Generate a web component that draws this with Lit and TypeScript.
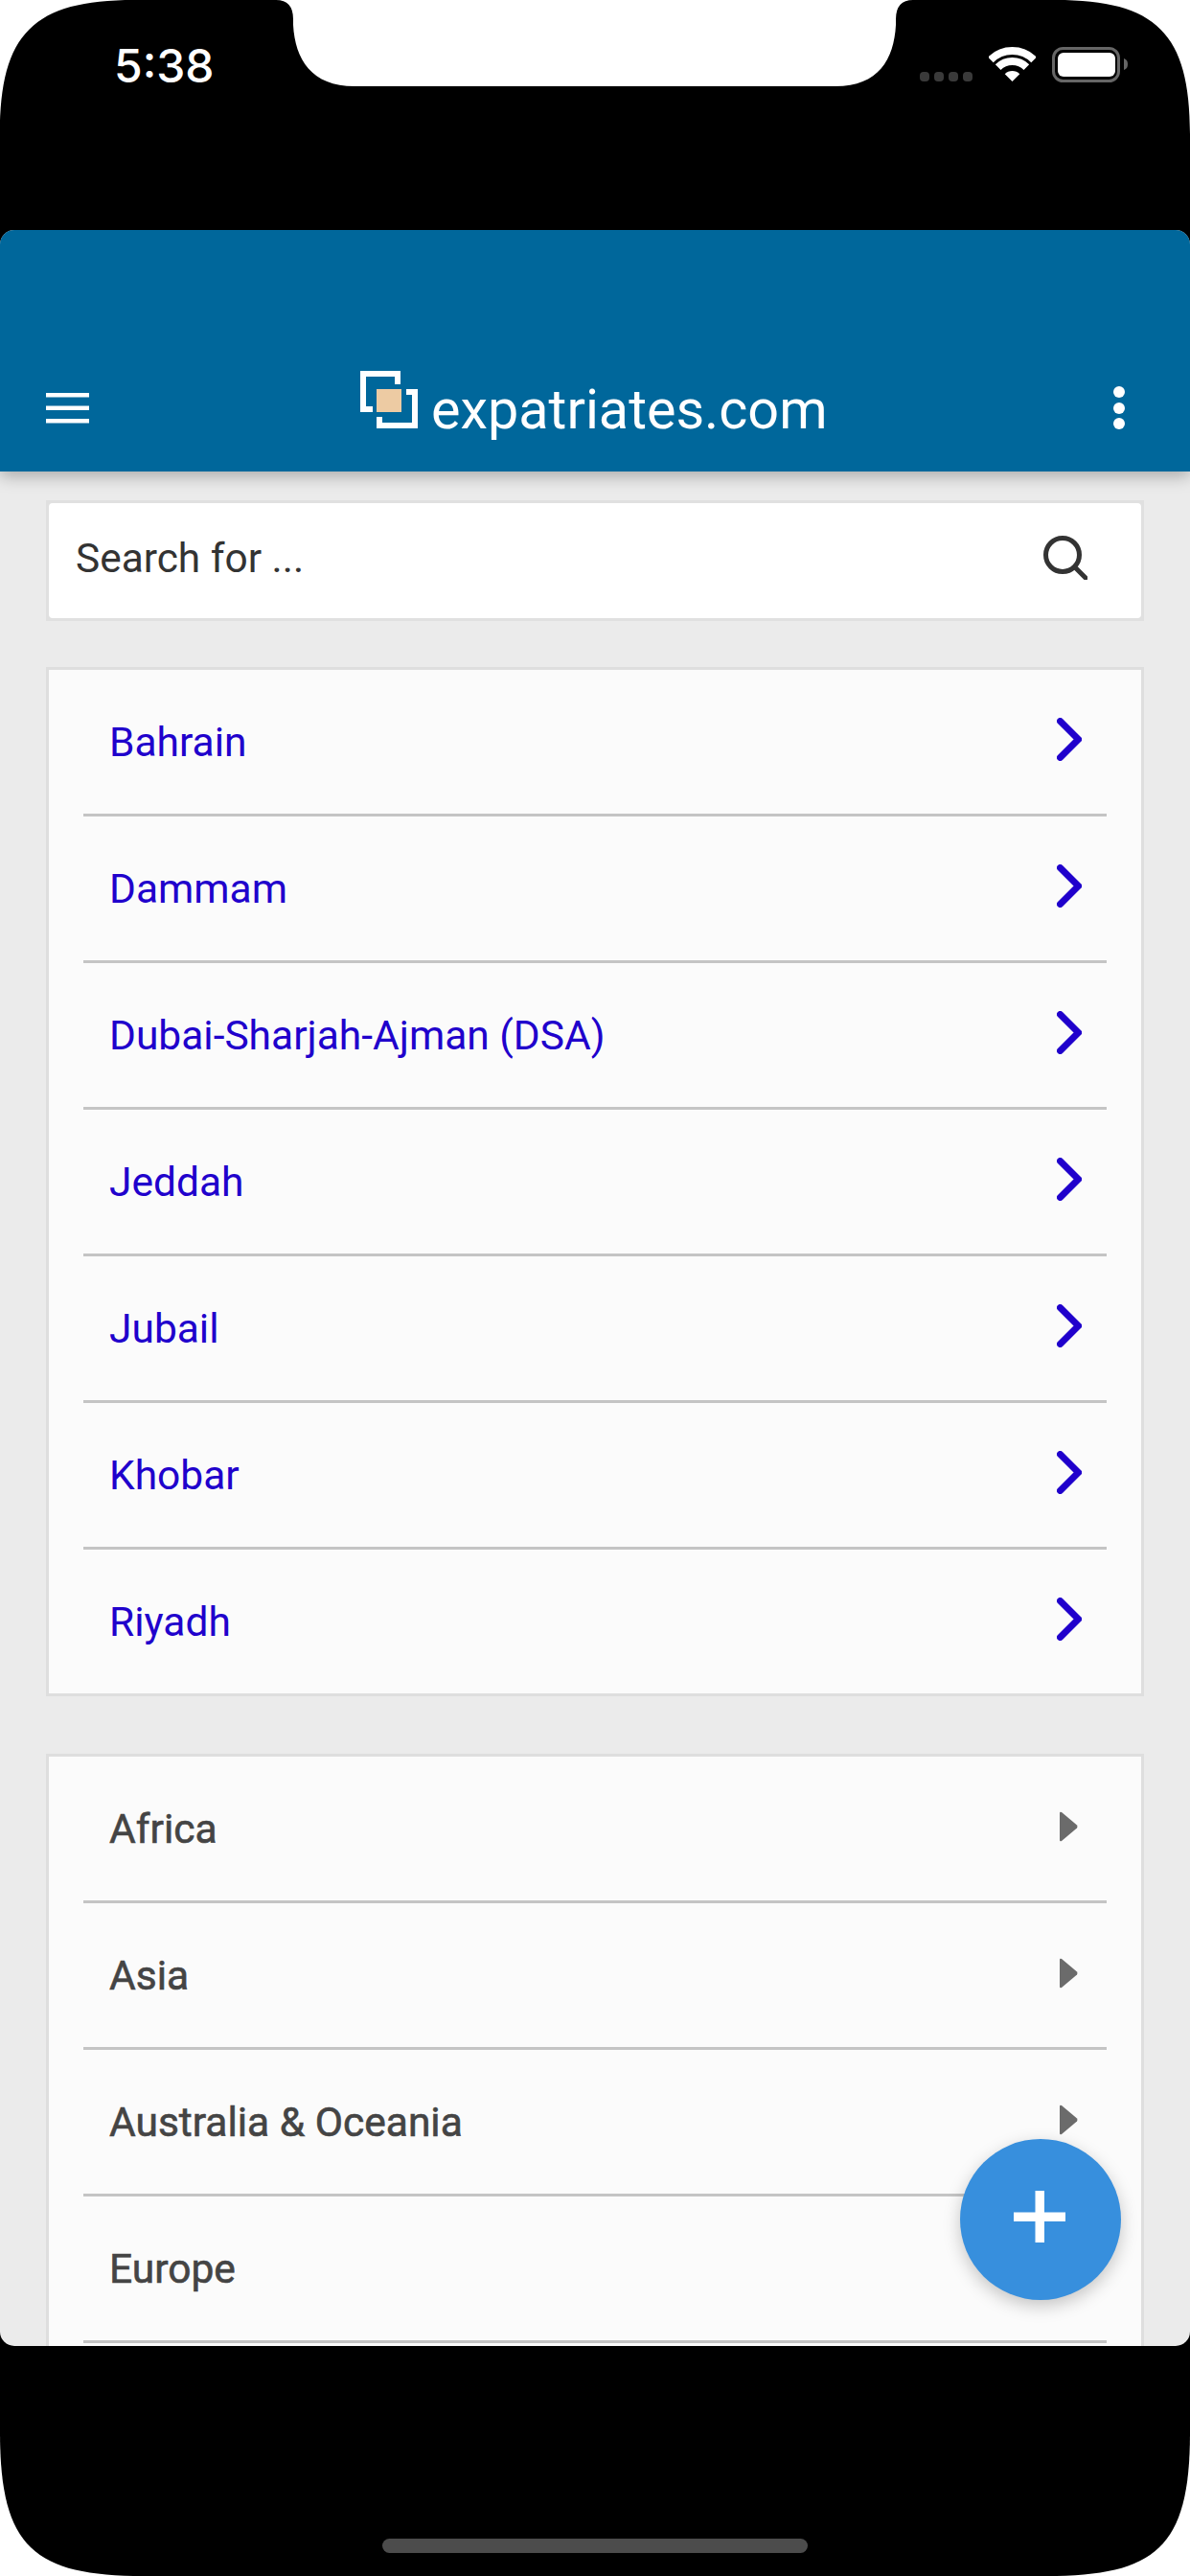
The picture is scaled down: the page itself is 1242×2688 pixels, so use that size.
import { LitElement, html, css, svg } from "lit";
import { customElement } from "lit/decorators.js";

const CITIES = ["Bahrain", "Dammam", "Dubai-Sharjah-Ajman (DSA)", "Jeddah", "Jubail", "Khobar", "Riyadh"];
const REGIONS = ["Africa", "Asia", "Australia & Oceania", "Europe"];

@customElement("app-root")
export class AppRoot extends LitElement {
  static styles = css`
    :host { display: block; width: 1242px; height: 2688px; background: #fff; font-family: Roboto, "Liberation Sans", sans-serif; overflow: hidden; }
    .bezel { position: relative; display: block; width: 1242px; }
    .bezel-top { height: 240px; }
    .bezel-bottom { height: 240px; }
    .bezel-art { position: absolute; inset: 0; width: 1242px; height: 240px; display: block; }
    .status { position: relative; height: 120px; display: flex; align-items: flex-start; padding-left: 119px; box-sizing: border-box; }
    .time { font-family: Inter, "Liberation Sans", sans-serif; font-weight: 500; font-size: 48px; line-height: 48px; color: #fff; margin-top: 45px; width: 841px; }
    .signal { display: flex; gap: 5px; margin-top: 75px; width: 72px; }
    .signal i { display: block; width: 10px; height: 10px; border-radius: 4px; background: #3a3a3a; }
    .wifi { margin-top: 49px; width: 49px; height: 36px; margin-right: 17px; }
    .battery { margin-top: 49px; width: 80px; height: 37px; }
    .home { position: absolute; left: 399px; top: 201px; width: 444px; height: 15px; border-radius: 8px; background: #4c4c4c; }
    .frame { background: #000; height: 2208px; }
    .screen { position: relative; height: 2208px; border-radius: 15px; overflow: hidden; background: #ebebeb; }
    .header { position: relative; z-index: 1; height: 252px; box-sizing: border-box; background: #00679b; padding: 147px 68px 0 48px; display: flex; align-items: flex-start; box-shadow: 0 5px 16px rgba(0,0,0,.28); }
    .menu { display: block; margin-top: 23px; }
    .brand { display: flex; align-items: baseline; gap: 14px; margin-left: 283px; }
    .title { color: #fff; font-size: 57.5px; line-height: 56px; white-space: nowrap; }
    .dots { display: block; margin-top: 16px; margin-left: auto; }
    .main { padding: 30px 48px 0; display: flex; flex-direction: column; }
    .search { height: 126px; box-sizing: border-box; border: 3px solid #e0e0e0; background: #e0e0e0; display: block; }
    .search-in { height: 120px; box-sizing: border-box; background: #fff; border-radius: 4px; display: flex; align-items: center; justify-content: space-between; padding: 0 56px 6px 28px; font-size: 42.4px; color: #333; }
    .search-in svg { display: block; }
    .card { border: 3px solid #dedede; background: #fbfbfb; box-sizing: border-box; }
    .cities { margin-top: 48px; }
    .regions { margin-top: 60px; padding-bottom: 30px; }
    .row { height: 150px; margin: 0 36px; padding: 0 26px 0 27px; display: flex; align-items: center; justify-content: space-between; font-size: 42.5px; }
    .sep { border-bottom: 3px solid #c4c4c4; }
    .city { color: #2000cc; }
    .city svg { margin-bottom: 6px; }
    .region { color: #444; padding-right: 30px; -webkit-text-stroke: 0.6px #444; }
    .region svg { margin-bottom: 4px; }
    .row svg { display: block; }
    .fab { position: absolute; left: 1002px; top: 1992px; width: 168px; height: 168px; border-radius: 50%; background: #378fdd; z-index: 2; display: flex; align-items: center; justify-content: center; box-shadow: 0 6px 18px rgba(0,0,0,.22); }
    .fab svg { display: block; transform: translate(-1px, -3px); }
  `;

  private topArt() {
    return svg`<path fill="#000" d="M140 0 H288 Q306 0 306 20 V26 C308 62 325 90 370 90 H872 C917 90 933 62 935 26 V20 Q935 0 953 0 H1102 C1207 0 1242 35 1242 140 V240 H0 V140 C0 35 35 0 140 0 Z"/>`;
  }
  private bottomArt() {
    return svg`<path fill="#000" d="M0 0 H1242 V90 C1242 210 1207 240 1092 240 H150 C35 240 0 210 0 90 Z"/>`;
  }

  render() {
    return html`
      <div class="bezel bezel-top">
        <svg class="bezel-art" viewBox="0 0 1242 240">${this.topArt()}</svg>
        <div class="status">
          <div class="time">5:38</div>
          <div class="signal"><i></i><i></i><i></i><i></i></div>
          <svg class="wifi" viewBox="1032 49 49 36">
            <path fill="none" stroke="#fff" stroke-width="8" d="M1033.9 62.4 A32 32 0 0 1 1079.1 62.4"/>
            <path fill="none" stroke="#fff" stroke-width="8" d="M1041.65 70.15 A21 21 0 0 1 1071.35 70.15"/>
            <path fill="#fff" d="M1056.5 85 L1048.72 77.22 A11 11 0 0 1 1064.28 77.22 Z"/>
          </svg>
          <svg class="battery" viewBox="0 0 80 37">
            <rect x="1.5" y="1.5" width="68" height="34" rx="10" fill="none" stroke="#666" stroke-width="3"/>
            <rect x="6" y="6" width="60" height="25" rx="6" fill="#fff"/>
            <path fill="#666" d="M75 12 C78 13 79 15 79 18 C79 21 78 23 75 24 Z"/>
          </svg>
        </div>
      </div>
      <div class="frame">
        <div class="screen">
          <div class="header">
            <svg class="menu" width="45" height="32" viewBox="0 0 45 32" fill="#fff">
              <rect y="0" width="45" height="4.5"/><rect y="13.5" width="45" height="4.5"/><rect y="27" width="45" height="4.5"/>
            </svg>
            <div class="brand">
              <svg width="60" height="60" viewBox="0 0 60 60">
                <path fill="#fff" d="M0 0 H42 V14 H36 V6 H6 V37 H13 V43 H0 Z"/>
                <path fill="#fff" d="M48 19 H60 V60 H17 V48 H23 V54 H54 V25 H48 Z"/>
                <rect x="17" y="19" width="26" height="24" fill="#edcba3"/>
              </svg>
              <span class="title">expatriates.com</span>
            </div>
            <svg class="dots" width="12" height="45" viewBox="0 0 12 45" fill="#fff">
              <circle cx="6" cy="6" r="6"/><circle cx="6" cy="23" r="6"/><circle cx="6" cy="39" r="6"/>
            </svg>
          </div>
          <div class="main">
            <div class="search">
              <div class="search-in">
                <span>Search for ...</span>
                <svg width="46" height="46" viewBox="0 0 46 46" fill="none" stroke="#333" stroke-width="5" stroke-linecap="round">
                  <circle cx="20" cy="20" r="17.5"/><path d="M33 33 L44 44"/>
                </svg>
              </div>
            </div>
            <div class="card cities">
              ${CITIES.map((c, i) => html`
                <div class="row city ${i < CITIES.length - 1 ? "sep" : ""}">
                  <span>${c}</span>
                  <svg width="26" height="45" viewBox="0 0 26 45" fill="none" stroke="#2000cc" stroke-width="7" stroke-linejoin="miter" stroke-linecap="round">
                    <path d="M3.5 3.5 L22.5 22.5 L3.5 41.5"/>
                  </svg>
                </div>`)}
            </div>
            <div class="card regions">
              ${REGIONS.map((r) => html`
                <div class="row region sep">
                  <span>${r}</span>
                  <svg width="19" height="32" viewBox="0 0 19 32" fill="#6b6b6b">
                    <path d="M0 2 Q0 0 2 1 L18 14.5 Q19 16 18 17.5 L2 31 Q0 32 0 30 Z"/>
                  </svg>
                </div>`)}
            </div>
          </div>
          <div class="fab">
            <svg width="54" height="54" viewBox="0 0 54 54" fill="#fff">
              <rect x="22.5" y="0" width="9.5" height="54"/><rect x="0" y="22.5" width="54" height="9.5"/>
            </svg>
          </div>
        </div>
      </div>
      <div class="bezel bezel-bottom">
        <svg class="bezel-art" viewBox="0 0 1242 240">${this.bottomArt()}</svg>
        <div class="home"></div>
      </div>
    `;
  }
}
